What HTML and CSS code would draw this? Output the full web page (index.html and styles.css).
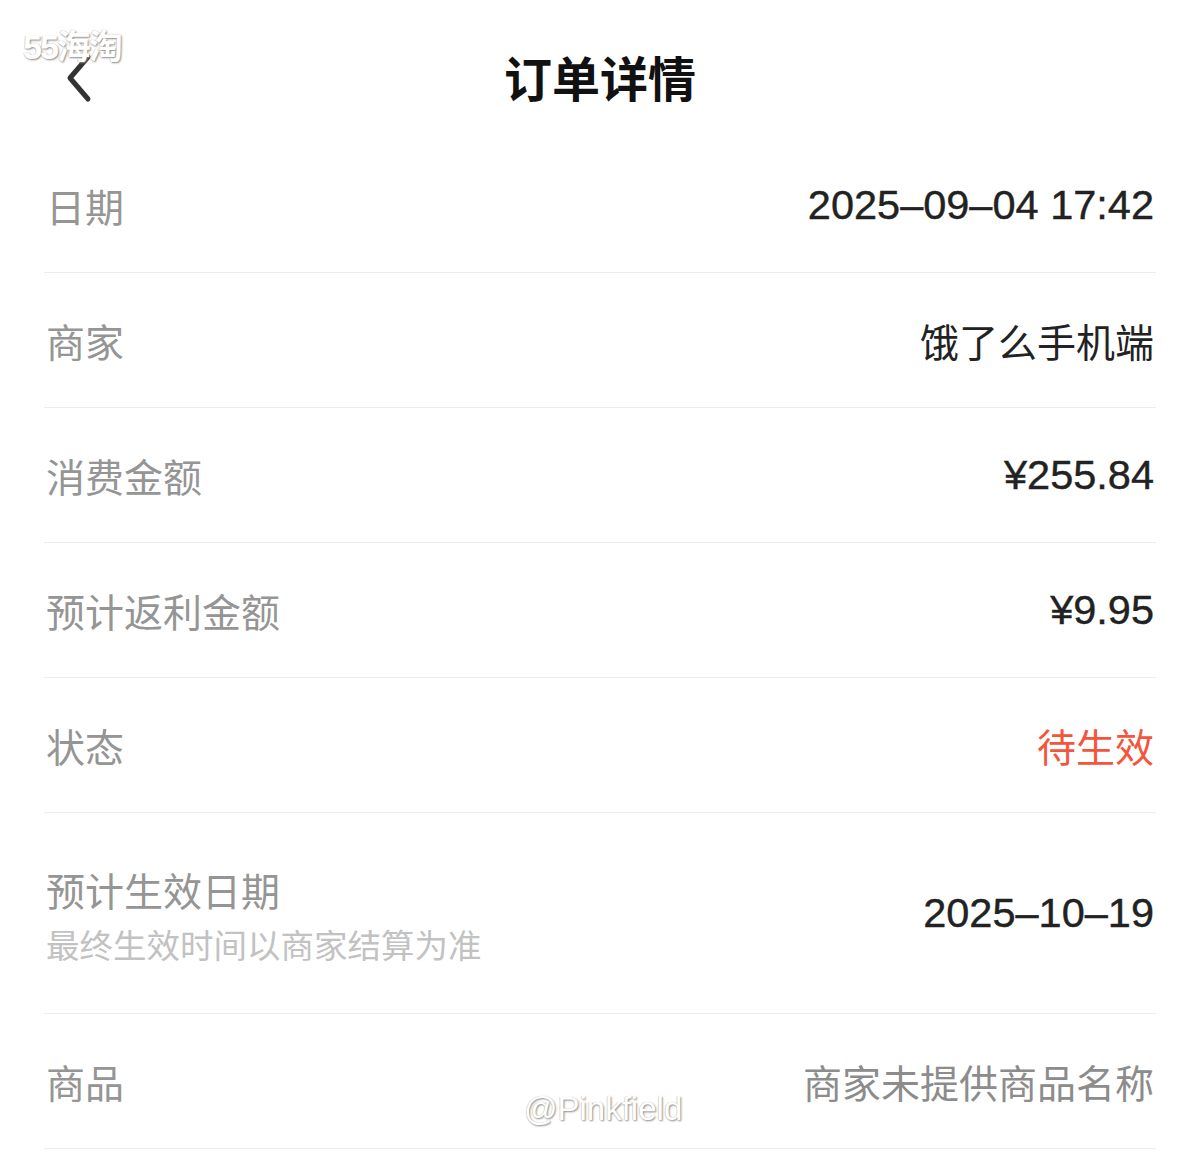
FILE: index.html
```html
<html>
<head>
<meta http-equiv="Content-Type" content="text/html; charset=utf-8"/>
<title>订单详情</title>
<link rel="stylesheet" href="styles.css">
</head>
<body>
	<div class="page">
		<div class="header">
			<a class="back" href="#">
				<svg width="30" height="50" viewBox="0 0 30 50">
					<path d="M24 4 L6 25 L24 46" fill="none" stroke="#333" stroke-width="5" stroke-linecap="round" stroke-linejoin="round"/>
				</svg>
			</a>
			<h1 class="title">订单详情</h1>
		</div>

		<div class="list">
			<div class="row">
				<span class="label">日期</span>
				<span class="value num">2025–09–04 17:42</span>
			</div>
			<div class="row">
				<span class="label">商家</span>
				<span class="value">饿了么手机端</span>
			</div>
			<div class="row">
				<span class="label">消费金额</span>
				<span class="value num">¥255.84</span>
			</div>
			<div class="row">
				<span class="label">预计返利金额</span>
				<span class="value num">¥9.95</span>
			</div>
			<div class="row">
				<span class="label">状态</span>
				<span class="value red">待生效</span>
			</div>
			<div class="row tall">
				<div class="label-group">
					<span class="label">预计生效日期</span>
					<span class="sub">最终生效时间以商家结算为准</span>
				</div>
				<span class="value num">2025–10–19</span>
			</div>
			<div class="row">
				<span class="label">商品</span>
				<span class="value grey">商家未提供商品名称</span>
			</div>
		</div>
	</div>

	<div class="mark mark-top">55海淘</div>
	<div class="mark mark-bottom">@Pinkfield</div>
</body>
</html>
```

FILE: styles.css
```css
body{
	margin: 0;
	background-color: #ffffff;
	font-family: "Liberation Sans", "Noto Sans CJK SC", sans-serif;
	color: #222222;
}

.page{
	width: 1200px;
}

.header{
	height: 138px;
	display: flex;
	align-items: center;
	justify-content: center;
	position: relative;
}
.back{
	position: absolute;
	left: 64px;
	top: 53px;
	display: block;
}
.title{
	margin: 0;
	margin-top: 14px;
	font-size: 48px;
	font-weight: bold;
	color: #111111;
	font-family: "Noto Sans CJK SC", sans-serif;
}

.list{
	padding: 0 44px;
}
.row{
	height: 134px;
	border-bottom: 1px solid #ececec;
	display: flex;
	align-items: center;
	justify-content: space-between;
	padding: 0 2px;
}
.row.tall{
	height: 200px;
}

.label{
	font-size: 39px;
	color: #959595;
	font-family: "Noto Sans CJK SC", sans-serif;
}
.label-group{
	display: flex;
	flex-direction: column;
	margin-top: 4px;
}
.label-group .label{
	line-height: 50px;
}
.sub{
	margin-top: 8px;
	font-size: 33.5px;
	line-height: 44px;
	color: #c2c2c2;
	font-family: "Noto Sans CJK SC", sans-serif;
}

.value{
	font-size: 39px;
	color: #222222;
}
.value.num{
	font-size: 41.5px;
	-webkit-text-stroke: 0.4px #222222;
}
.value.red{
	color: #f4553d;
}
.value.grey{
	color: #8c8c8c;
}

.mark{
	position: absolute;
	color: #ffffff;
	text-shadow: 1px 1px 2px #8a8a8a, -0.5px -0.5px 0 #c8c8c8;
}
.mark-top{
	left: 23px;
	top: 20px;
	font-size: 34px;
	font-weight: bold;
	letter-spacing: -2px;
}
.mark-bottom{
	left: 524px;
	top: 1090px;
	font-size: 33px;
}
```
